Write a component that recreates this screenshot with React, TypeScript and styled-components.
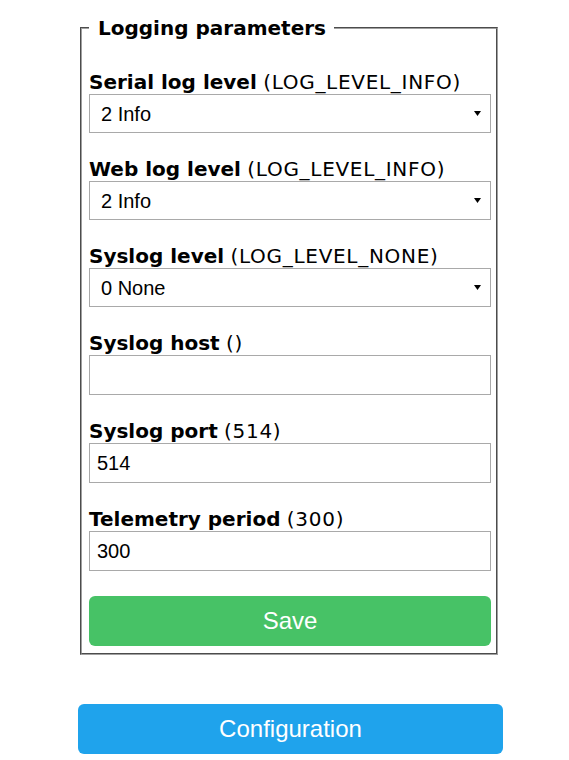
import React from 'react'
import styled, { createGlobalStyle } from 'styled-components'

const GlobalStyle = createGlobalStyle`
  body {
    margin: 0;
    background: #fff;
    color: #000;
    font-family: "DejaVu Sans", Verdana, sans-serif;
  }
`

type Field = {
  label: string
  def: string
  kind: 'select' | 'input'
  value: string
}

const levels = ['0 None', '1 Error', '2 Info', '3 Debug', '4 More debug']

const fields: Field[] = [
  { label: 'Serial log level', def: 'LOG_LEVEL_INFO', kind: 'select', value: '2 Info' },
  { label: 'Web log level', def: 'LOG_LEVEL_INFO', kind: 'select', value: '2 Info' },
  { label: 'Syslog level', def: 'LOG_LEVEL_NONE', kind: 'select', value: '0 None' },
  { label: 'Syslog host', def: '', kind: 'input', value: '' },
  { label: 'Syslog port', def: '514', kind: 'input', value: '514' },
  { label: 'Telemetry period', def: '300', kind: 'input', value: '300' },
]

function App() {
  return (
    <>
      <GlobalStyle />
      <Page>
        <Fieldset>
          <Legend>Logging parameters</Legend>
          <Fields>
            {fields.map((f) => (
              <Group key={f.label}>
                <Label>
                  <b>{f.label}</b> <Default>({f.def})</Default>
                </Label>
                {f.kind === 'select' ? (
                  <SelectWrap>
                    <Select defaultValue={f.value}>
                      {levels.map((l) => (
                        <option key={l}>{l}</option>
                      ))}
                    </Select>
                    <Arrow viewBox="0 0 7 5" aria-hidden>
                      <path d="M0 0h7L3.5 5z" fill="#000" />
                    </Arrow>
                  </SelectWrap>
                ) : (
                  <Input defaultValue={f.value} />
                )}
              </Group>
            ))}
            <Button $color="#47c266">Save</Button>
          </Fields>
        </Fieldset>
        <Button $color="#1fa3ec">Configuration</Button>
      </Page>
    </>
  )
}

export default App

const Page = styled.div`
  width: 425px;
  margin-left: 78px;
  padding-top: 16px;
  display: flex;
  flex-direction: column;
  gap: 48px;
`

const Fieldset = styled.fieldset`
  margin: 0 5px 0 2px;
  padding: 30px 5px 7px 7px;
  border: 2px groove #a0a0a0;
  min-width: 0;
`

const Legend = styled.legend`
  padding: 0 8px 0 9px;
  font-size: 20px;
  line-height: 24px;
  font-weight: bold;
`

const Fields = styled.div`
  display: flex;
  flex-direction: column;
  gap: 24px;
`

const Group = styled.div`
  display: flex;
  flex-direction: column;
`

const Label = styled.div`
  font-size: 20px;
  line-height: 24px;
  white-space: nowrap;
`

const Default = styled.span`
  letter-spacing: 0.7px;
`

const SelectWrap = styled.div`
  position: relative;
`

const Select = styled.select`
  appearance: none;
  width: 100%;
  height: 39px;
  box-sizing: border-box;
  margin: 0;
  padding: 0 28px 0 11px;
  border: 1px solid #a9a9a9;
  border-radius: 0;
  background: #fff;
  color: #000;
  font-family: "Liberation Sans", Arial, sans-serif;
  font-size: 20px;
`

const Arrow = styled.svg`
  position: absolute;
  right: 10px;
  top: 17px;
  width: 7px;
  height: 5px;
  pointer-events: none;
`

const Input = styled.input`
  width: 100%;
  height: 40px;
  box-sizing: border-box;
  margin: 0;
  padding: 0 7px;
  border: 1px solid #a9a9a9;
  border-radius: 0;
  color: #000;
  font-family: "Liberation Sans", Arial, sans-serif;
  font-size: 20px;
`

const Button = styled.button<{ $color: string }>`
  display: block;
  width: 100%;
  height: 50px;
  margin-top: 1px;
  padding: 0;
  border: 0;
  border-radius: 6px;
  background: ${(p) => p.$color};
  color: #fff;
  font-family: "Liberation Sans", Arial, sans-serif;
  font-size: 24px;
  line-height: 50px;
  cursor: pointer;
`
